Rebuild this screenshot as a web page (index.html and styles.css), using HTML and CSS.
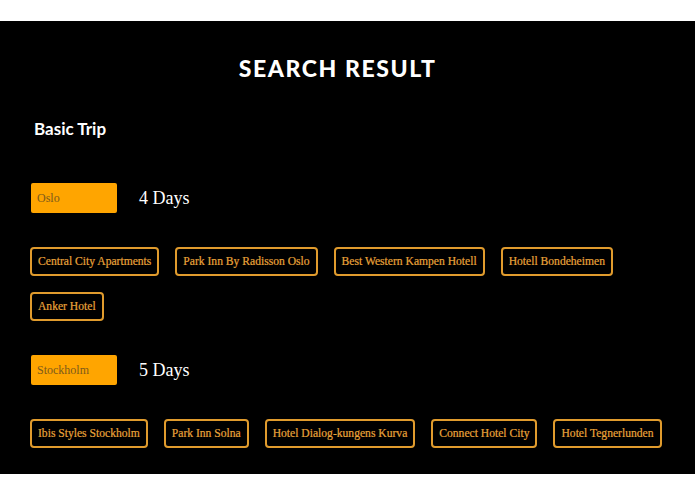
FILE: index.html
```html
<!DOCTYPE html>
<html>
<head>
<meta charset="utf-8">
<link rel="stylesheet" href="styles.css">
</head>
<body>
<div class="page">
  <h1 class="title">SEARCH RESULT</h1>
  <h2 class="trip">Basic Trip</h2>
  <section class="city">
    <div class="city-head">
      <div class="city-name">Oslo</div>
      <div class="days">4 Days</div>
    </div>
    <div class="hotels">
      <span class="hotel">Central City Apartments</span>
      <span class="hotel">Park Inn By Radisson Oslo</span>
      <span class="hotel">Best Western Kampen Hotell</span>
      <span class="hotel">Hotell Bondeheimen</span>
      <span class="hotel">Anker Hotel</span>
    </div>
  </section>
  <section class="city">
    <div class="city-head">
      <div class="city-name">Stockholm</div>
      <div class="days">5 Days</div>
    </div>
    <div class="hotels">
      <span class="hotel">Ibis Styles Stockholm</span>
      <span class="hotel">Park Inn Solna</span>
      <span class="hotel">Hotel Dialog-kungens Kurva</span>
      <span class="hotel">Connect Hotel City</span>
      <span class="hotel">Hotel Tegnerlunden</span>
    </div>
  </section>
</div>
</body>
</html>
```
FILE: styles.css
```css
html, body {
  margin: 0;
  padding: 0;
  background: #ffffff;
}
body {
  padding-top: 21px;
}
.page {
  background: #000000;
  height: 453px;
  box-sizing: border-box;
  padding: 0 10px 0 30px;
  overflow: hidden;
}
.title {
  margin: 0 40px 0 0;
  padding-top: 33px;
  text-align: center;
  font-family: Lato, "Noto Sans", sans-serif;
  font-weight: 900;
  font-size: 23px;
  line-height: 28px;
  letter-spacing: 1.6px;
  color: #ffffff;
}
.trip {
  margin: 36px 0 0 4px;
  font-family: Lato, "Noto Sans", sans-serif;
  font-weight: 700;
  font-size: 17px;
  line-height: 22px;
  color: #ffffff;
}
.city-head {
  display: flex;
  align-items: center;
  gap: 22px;
  margin-top: 43px;
  margin-left: 1px;
}
.city + .city .city-head {
  margin-top: 34px;
}
.city-name {
  width: 86px;
  height: 30px;
  box-sizing: border-box;
  background: #ffa500;
  border-radius: 2px;
  padding-left: 6px;
  display: flex;
  align-items: center;
  font-family: "Liberation Serif", serif;
  font-size: 12px;
  color: #7d5a1c;
}
.days {
  font-family: "Liberation Serif", serif;
  font-size: 18px;
  color: #ffffff;
}
.hotels {
  display: flex;
  flex-wrap: wrap;
  gap: 16px 16px;
  margin-top: 34px;
}
.hotel {
  display: inline-flex;
  align-items: center;
  height: 29px;
  box-sizing: border-box;
  padding: 0 6px;
  border: 2px solid #e09b2d;
  border-radius: 4px;
  font-family: "Liberation Serif", serif;
  font-size: 11.6px;
  color: #eaa43a;
  -webkit-text-stroke: 0.2px #eaa43a;
}
```
